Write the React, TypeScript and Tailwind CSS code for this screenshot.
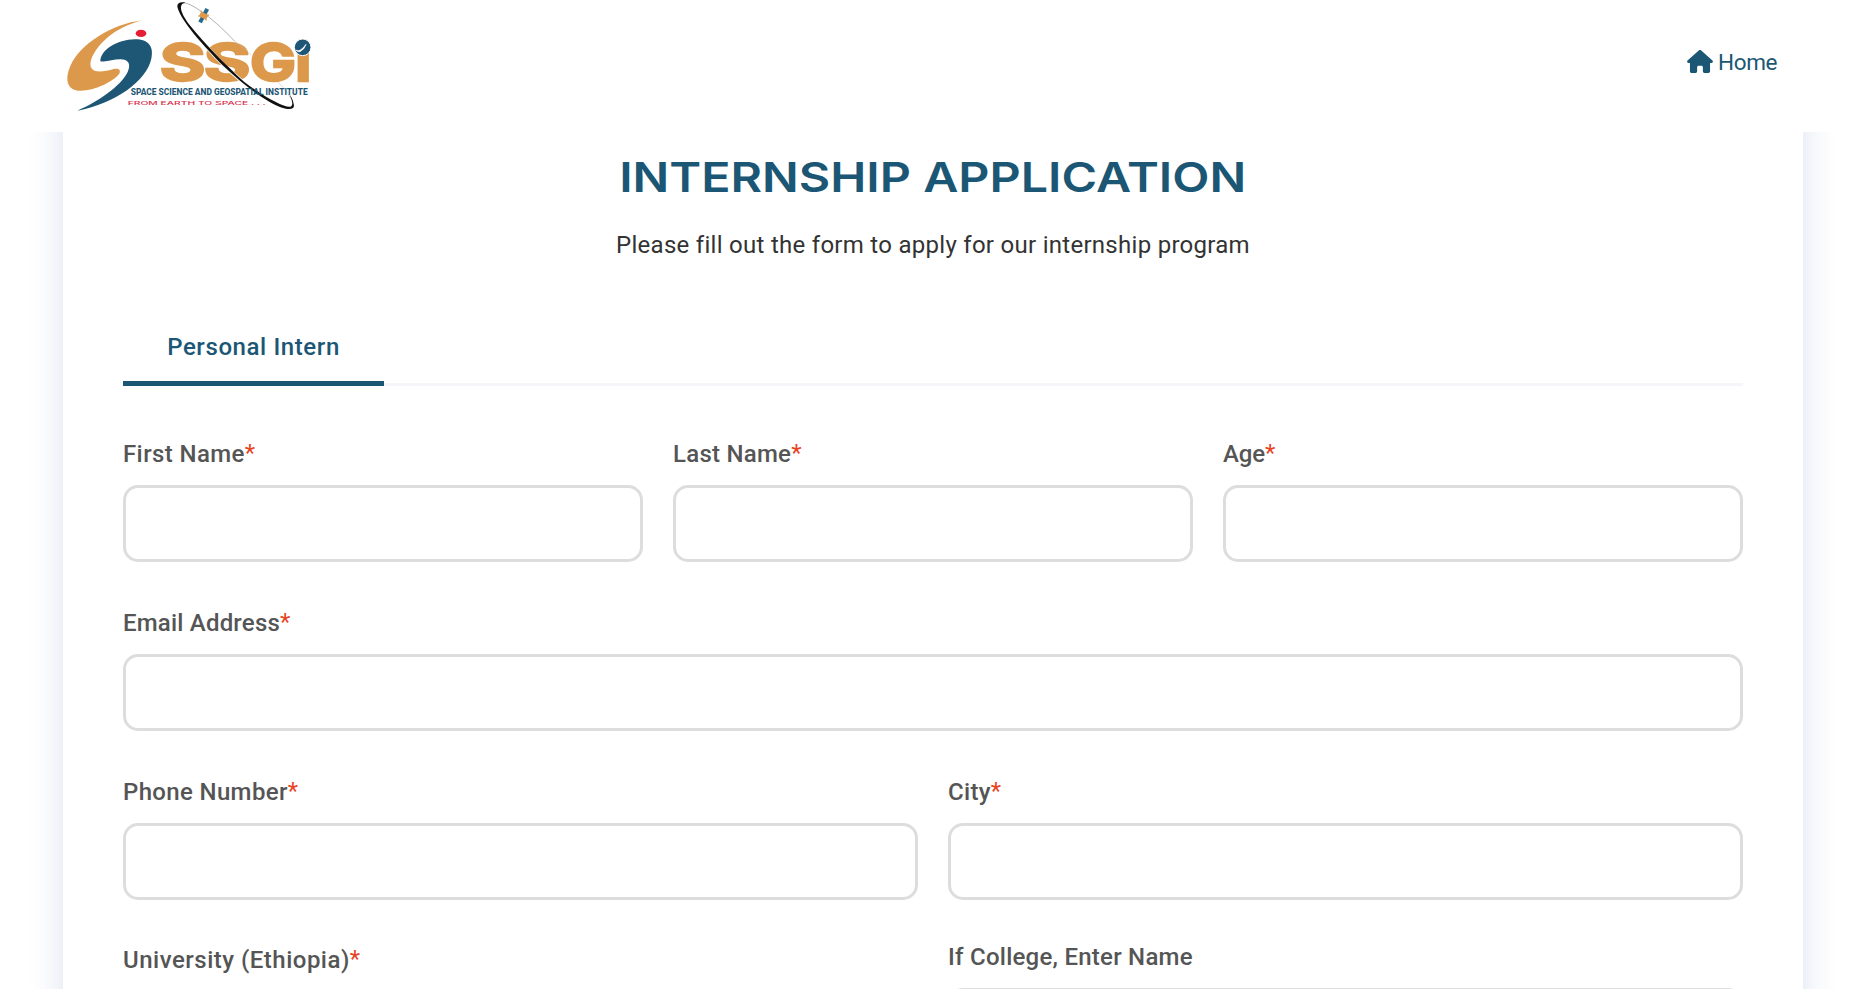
import { FaHouse } from "react-icons/fa6";

type FieldProps = { label: string; required?: boolean; tracking?: string };

function Field({ label, required = false, tracking = "tracking-[0.2px]" }: FieldProps) {
  return (
    <div className="flex min-w-0 flex-1 flex-col">
      <label className={`mb-[13px] flex text-2xl font-medium text-[#555] ${required ? "h-[39px] pt-[3px]" : "h-[36px]"}`}>
        <span className={`leading-[36px] whitespace-nowrap ${tracking}`}>{label}</span>
        {required && <span className="-mt-px leading-[36px] font-normal text-[#e8431f]">*</span>}
      </label>
      <input className="h-[77px] w-full rounded-[15px] border-[3px] border-[#ddd] bg-white px-5 text-2xl outline-none" />
    </div>
  );
}

function Logo() {
  return (
    <svg viewBox="0 0 840 375" className="h-[125px] w-[280px]" role="img" aria-label="SSGI">
      <path fill="#dd994b" d="M277 61C185 72 90 132 61 198C44 237 51 268 84 272C128 276 188 246 207 223C214 210 207 205 191 207C167 214 138 219 127 208C111 190 132 149 170 115C201 88 240 71 277 61Z" />
      <path fill="#1d5775" d="M151 184C151 151 200 119 255 118C296 118 312 140 304 176C290 241 198 310 82 332C145 304 211 260 233 216C244 192 235 178 211 178C188 178 172 187 151 184Z" />
      <ellipse cx="273" cy="100" rx="16" ry="11" fill="#e71d36" />
      <g fill="#dd994b" stroke="#dd994b" strokeWidth="7" fontFamily="Inter, sans-serif" fontWeight="700" fontSize="158">
        <text x="329" y="244" textLength="137" lengthAdjust="spacingAndGlyphs">S</text>
        <text x="461" y="244" textLength="140" lengthAdjust="spacingAndGlyphs">S</text>
        <text x="600" y="244" textLength="138" lengthAdjust="spacingAndGlyphs">G</text>
        <text x="736" y="244" textLength="48" lengthAdjust="spacingAndGlyphs">i</text>
      </g>
      <circle cx="758" cy="142" r="25" fill="#1d5775" stroke="#fff" strokeWidth="3" />
      <path d="M737 150Q744 157 750 155Q763 149 768 133Q760 145 750 151Q744 154 737 150Z" fill="#fff" stroke="#fff" strokeWidth="2" />
      <path d="M400 8C430 10 500 65 554 124" fill="none" stroke="#888" strokeWidth="2" />
      <path d="M554 124Q584 146 604 166M684 246Q712 272 724 298" fill="none" stroke="#bbb" strokeWidth="1.5" />
      <path d="M388 22C400 62 455 128 523 197C570 241 640 300 700 322" fill="none" stroke="#fff" strokeWidth="11" />
      <path d="M404 7C386 4 378 12 384 27C397 66 455 132 521 199C572 247 642 304 696 323C720 331 736 327 731 312C729 300 724 290 718 283C727 302 731 317 721 320C705 324 640 290 582 245C524 193 461 127 422 79C393 43 383 13 404 9Z" fill="#111" />
      <g transform="rotate(28 461 47)">
        <rect x="455" y="24" width="12" height="46" fill="#28698c" />
        <rect x="449" y="39" width="24" height="16" rx="3" fill="#dd994b" />
        <path d="M447 38L475 56M475 38L447 56" stroke="#dd994b" strokeWidth="4" />
      </g>
      <text x="242" y="286" textLength="531" lengthAdjust="spacingAndGlyphs" fill="#1d5775" fontFamily="Roboto, sans-serif" fontWeight="800" fontSize="29">SPACE SCIENCE AND GEOSPATIAL INSTITUTE</text>
      <text x="233" y="314" textLength="414" lengthAdjust="spacingAndGlyphs" fill="#d8344e" fontFamily="Inter, sans-serif" fontWeight="500" fontSize="15">FROM EARTH TO SPACE . . .</text>
    </svg>
  );
}

export default function App() {
  return (
    <div className="flex h-screen flex-col overflow-hidden bg-white font-['Roboto',sans-serif]">
      <header className="relative z-10 flex h-[132px] shrink-0 items-start justify-between bg-white pr-[74px] pl-[50px]">
        <Logo />
        <a className="mt-[44px] flex items-center gap-[5px] text-[22.5px] leading-9 text-[#1b5775]">
          <FaHouse className="-mt-px h-[23px] w-[26px]" />
          <span className="tracking-[-0.4px]">Home</span>
        </a>
      </header>
      <main className="min-h-0 flex-1 overflow-hidden">
        <section className="-mt-[60px] ml-[63px] h-[1300px] w-[1740px] bg-white px-[60px] pt-[80px] shadow-[0_0_33px_rgba(8,60,150,0.15)]">
          <div className="flex flex-col items-center">
            <h1 className="scale-x-[1.18] font-['Inter',sans-serif] text-[41px] leading-[50px] font-semibold whitespace-nowrap text-[#1b5775]">INTERNSHIP APPLICATION</h1>
            <p className="mt-[25px] text-2xl leading-[36px] tracking-[0.28px] text-[#333]">Please fill out the form to apply for our internship program</p>
          </div>
          <div className="mt-[66px] flex border-b-[3px] border-[#f5f6fa]">
            <button className="-mb-[3px] w-[261px] border-b-[5px] border-[#1b5775] pb-4 text-2xl leading-[36px] font-medium tracking-[0.6px] text-[#1b5775]">Personal Intern</button>
          </div>
          <form className="mt-[47px] flex flex-col gap-[40px]">
            <div className="flex gap-[30px]">
              <Field label="First Name" required tracking="tracking-[0.4px]" />
              <Field label="Last Name" required tracking="tracking-[0.25px]" />
              <Field label="Age" required tracking="tracking-[-0.1px]" />
            </div>
            <Field label="Email Address" required />
            <div className="flex gap-[30px]">
              <Field label="Phone Number" required tracking="tracking-[0.35px]" />
              <Field label="City" required tracking="tracking-[0.3px]" />
            </div>
            <div className="-mt-px flex gap-[30px]">
              <Field label="University (Ethiopia)" required tracking="tracking-[0.5px]" />
              <Field label="If College, Enter Name" tracking="tracking-[0.25px]" />
            </div>
          </form>
        </section>
      </main>
    </div>
  );
}
